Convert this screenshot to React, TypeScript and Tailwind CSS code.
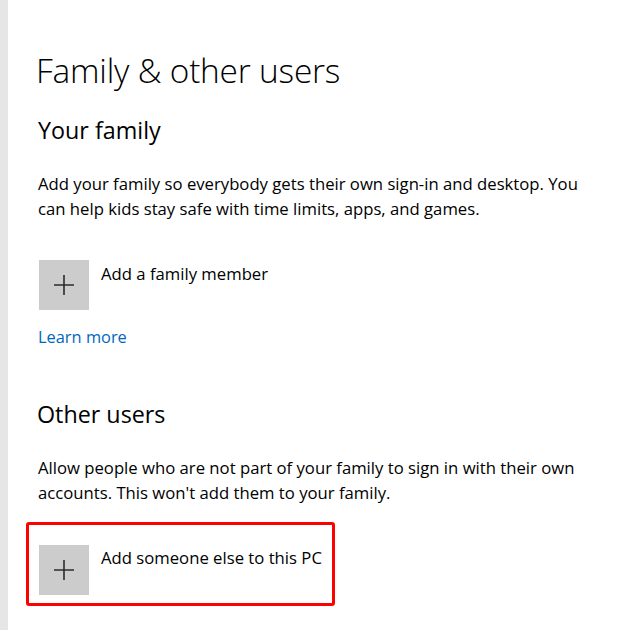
import React from "react";

function PlusBox() {
  return (
    <div className="w-[50px] h-[50px] bg-[#cccccc] flex items-center justify-center shrink-0">
      <svg width="22" height="22" viewBox="0 0 22 22">
        <path d="M11 1 V21 M1 11 H21" stroke="#2b2b2b" strokeWidth="1.6" fill="none" />
      </svg>
    </div>
  );
}

export default function App() {
  return (
    <div
      className="w-[638px] h-[630px] bg-white flex overflow-hidden text-black"
      style={{ fontFamily: '"Open Sans", "Noto Sans", sans-serif' }}
    >
      <div className="w-[8px] h-full bg-[#e6e6e6] shrink-0" />
      <div className="pl-[28px] flex flex-col">
        <div className="mt-[50px] text-[33.4px] leading-[40px] font-light tracking-[-0.2px]">
          Family &amp; other users
        </div>
        <div className="mt-[24px] pl-[2px] text-[23.3px] leading-[32px] font-normal">
          Your family
        </div>
        <div className="mt-[24.5px] pl-[2px] text-[16.7px] leading-[25px]">
          Add your family so everybody gets their own sign-in and desktop. You
          <br />
          can help kids stay safe with time limits, apps, and games.
        </div>
        <div className="mt-[39.5px] pl-[3px] flex items-start gap-[12px]">
          <PlusBox />
          <div className="text-[16.7px] leading-[25px] mt-[0.5px]">Add a family member</div>
        </div>
        <div className="mt-[13.5px] pl-[2px] text-[16.4px] leading-[25px] text-[#0067c0]">
          Learn more
        </div>
        <div className="mt-[49.5px] pl-[1px] text-[23.3px] leading-[32px]">Other users</div>
        <div className="mt-[24.5px] pl-[2px] text-[16.7px] leading-[25px]">
          Allow people who are not part of your family to sign in with their own
          <br />
          accounts. This won't add them to your family.
        </div>
        <div className="mt-[17.5px] ml-[-10px] w-[309px] h-[84px] border-[3px] border-[#ff0000] rounded-[3px] pl-[10px] pt-[20px] flex items-start gap-[12px]">
          <PlusBox />
          <div className="text-[16.7px] leading-[25px]">Add someone else to this PC</div>
        </div>
      </div>
    </div>
  );
}
